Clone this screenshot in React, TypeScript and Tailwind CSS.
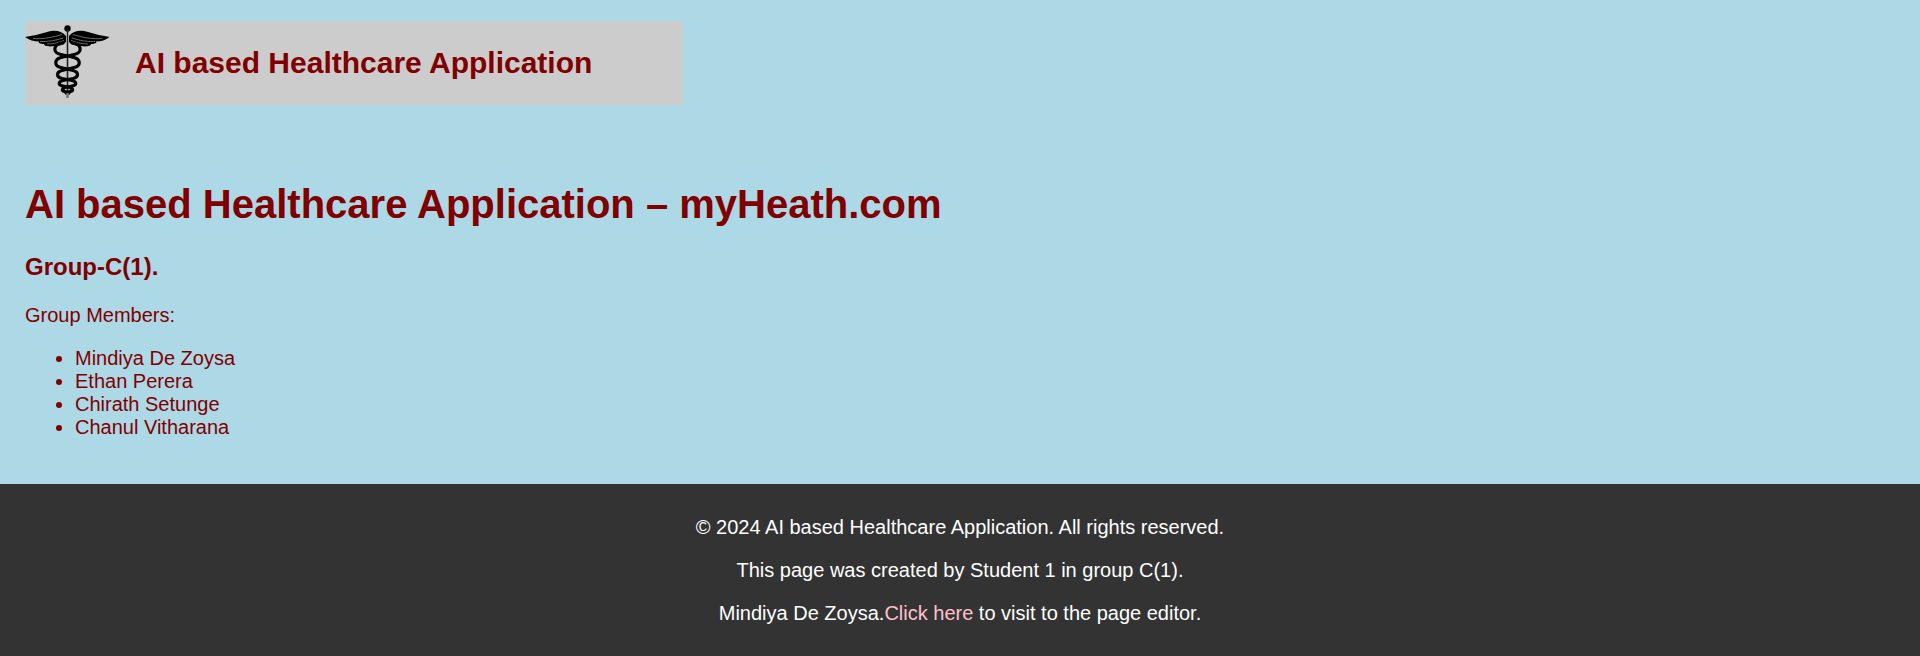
export default function App() {
  return (
    <div className="min-h-[656px] bg-[#add8e6] font-['Liberation_Sans',Arial,sans-serif] text-[#800000]">
      <header className="pt-[21px] pl-[25px]">
        <div className="flex h-[84px] w-[658px] items-center bg-[#cccccc]">
          <Caduceus />
          <h2 className="ml-[25px] text-[30px] font-bold leading-[34px]">AI based Healthcare Application</h2>
        </div>
      </header>

      <main className="px-[25px] pt-[76px] pb-[25px]">
        <h1 className="text-[40px] font-bold leading-[46px]">AI based Healthcare Application – myHeath.com</h1>
        <h3 className="mt-[26px] text-[24px] font-bold leading-[28px]">Group-C(1).</h3>
        <p className="mt-[23px] text-[20px] leading-[23px]">Group Members:</p>
        <ul className="mt-5 mb-5 list-disc pl-[50px] text-[20px] leading-[23px]">
          <li>Mindiya De Zoysa</li>
          <li>Ethan Perera</li>
          <li>Chirath Setunge</li>
          <li>Chanul Vitharana</li>
        </ul>
      </main>

      <footer className="bg-[#333333] pt-[12px] pb-[11px] text-center text-[20px] leading-[23px] text-white">
        <p className="my-5">© 2024 AI based Healthcare Application. All rights reserved.</p>
        <p className="my-5">This page was created by Student 1 in group C(1).</p>
        <p className="my-5">
          Mindiya De Zoysa.<a href="#" className="text-[#ffc0cb]">Click here</a> to visit to the page editor.
        </p>
      </footer>
    </div>
  );
}

function Caduceus() {
  return (
    <svg width="85" height="84" viewBox="0 0 85 84" className="shrink-0">
      <circle cx="42.5" cy="7.5" r="3.2" fill="#000" />
      <path d="M42.5 9V74" stroke="#222" strokeWidth="1.6" fill="none" />
      {/* wings */}
      <g fill="#000">
        <path d="M41 15C36 9 29 9 22 11C15 13 7 15 0 16C4 19 9 20.5 14 20.5C13 22 15 23 19 23C19 25 24 26 29 25C34 25 38 24 41 21Z" />
        <path d="M44 15C49 9 56 9 63 11C70 13 78 15 84.5 16C81 19 76 20.5 71 20.5C72 22 70 23 66 23C66 25 61 26 56 25C51 25 47 24 44 21Z" />
      </g>
      <g stroke="#cccccc" strokeWidth="0.5" fill="none">
        <path d="M8 17.5C18 18.5 29 16 37 13.5" />
        <path d="M15 20.5C24 21 32 19 38 17" />
        <path d="M22 23C29 23 35 21 39 19.5" />
        <path d="M77 17.5C67 18.5 56 16 48 13.5" />
        <path d="M70 20.5C61 21 53 19 47 17" />
        <path d="M63 23C56 23 50 21 46 19.5" />
      </g>
      {/* serpents */}
      <g stroke="#000" fill="none" strokeLinecap="round">
        <path strokeWidth="3.2" d="M38 22C28 23 27 32 36 33.5L49 36.5C56 38.5 56 45 49 46.5L37 49.5C31 51 31 56 37 57.5L47 59.5C52 61 52 64 47 65L40 66.5C36 68 37 70 40 70.5L44 72" />
        <path strokeWidth="3.2" d="M47 22C57 23 58 32 49 33.5L36 36.5C29 38.5 29 45 36 46.5L48 49.5C54 51 54 56 48 57.5L38 59.5C33 61 33 64 38 65L45 66.5C49 68 48 70 45 70.5L41 72" />
      </g>
      <path d="M42.5 72V77" stroke="#777" strokeWidth="2.5" />
    </svg>
  );
}
